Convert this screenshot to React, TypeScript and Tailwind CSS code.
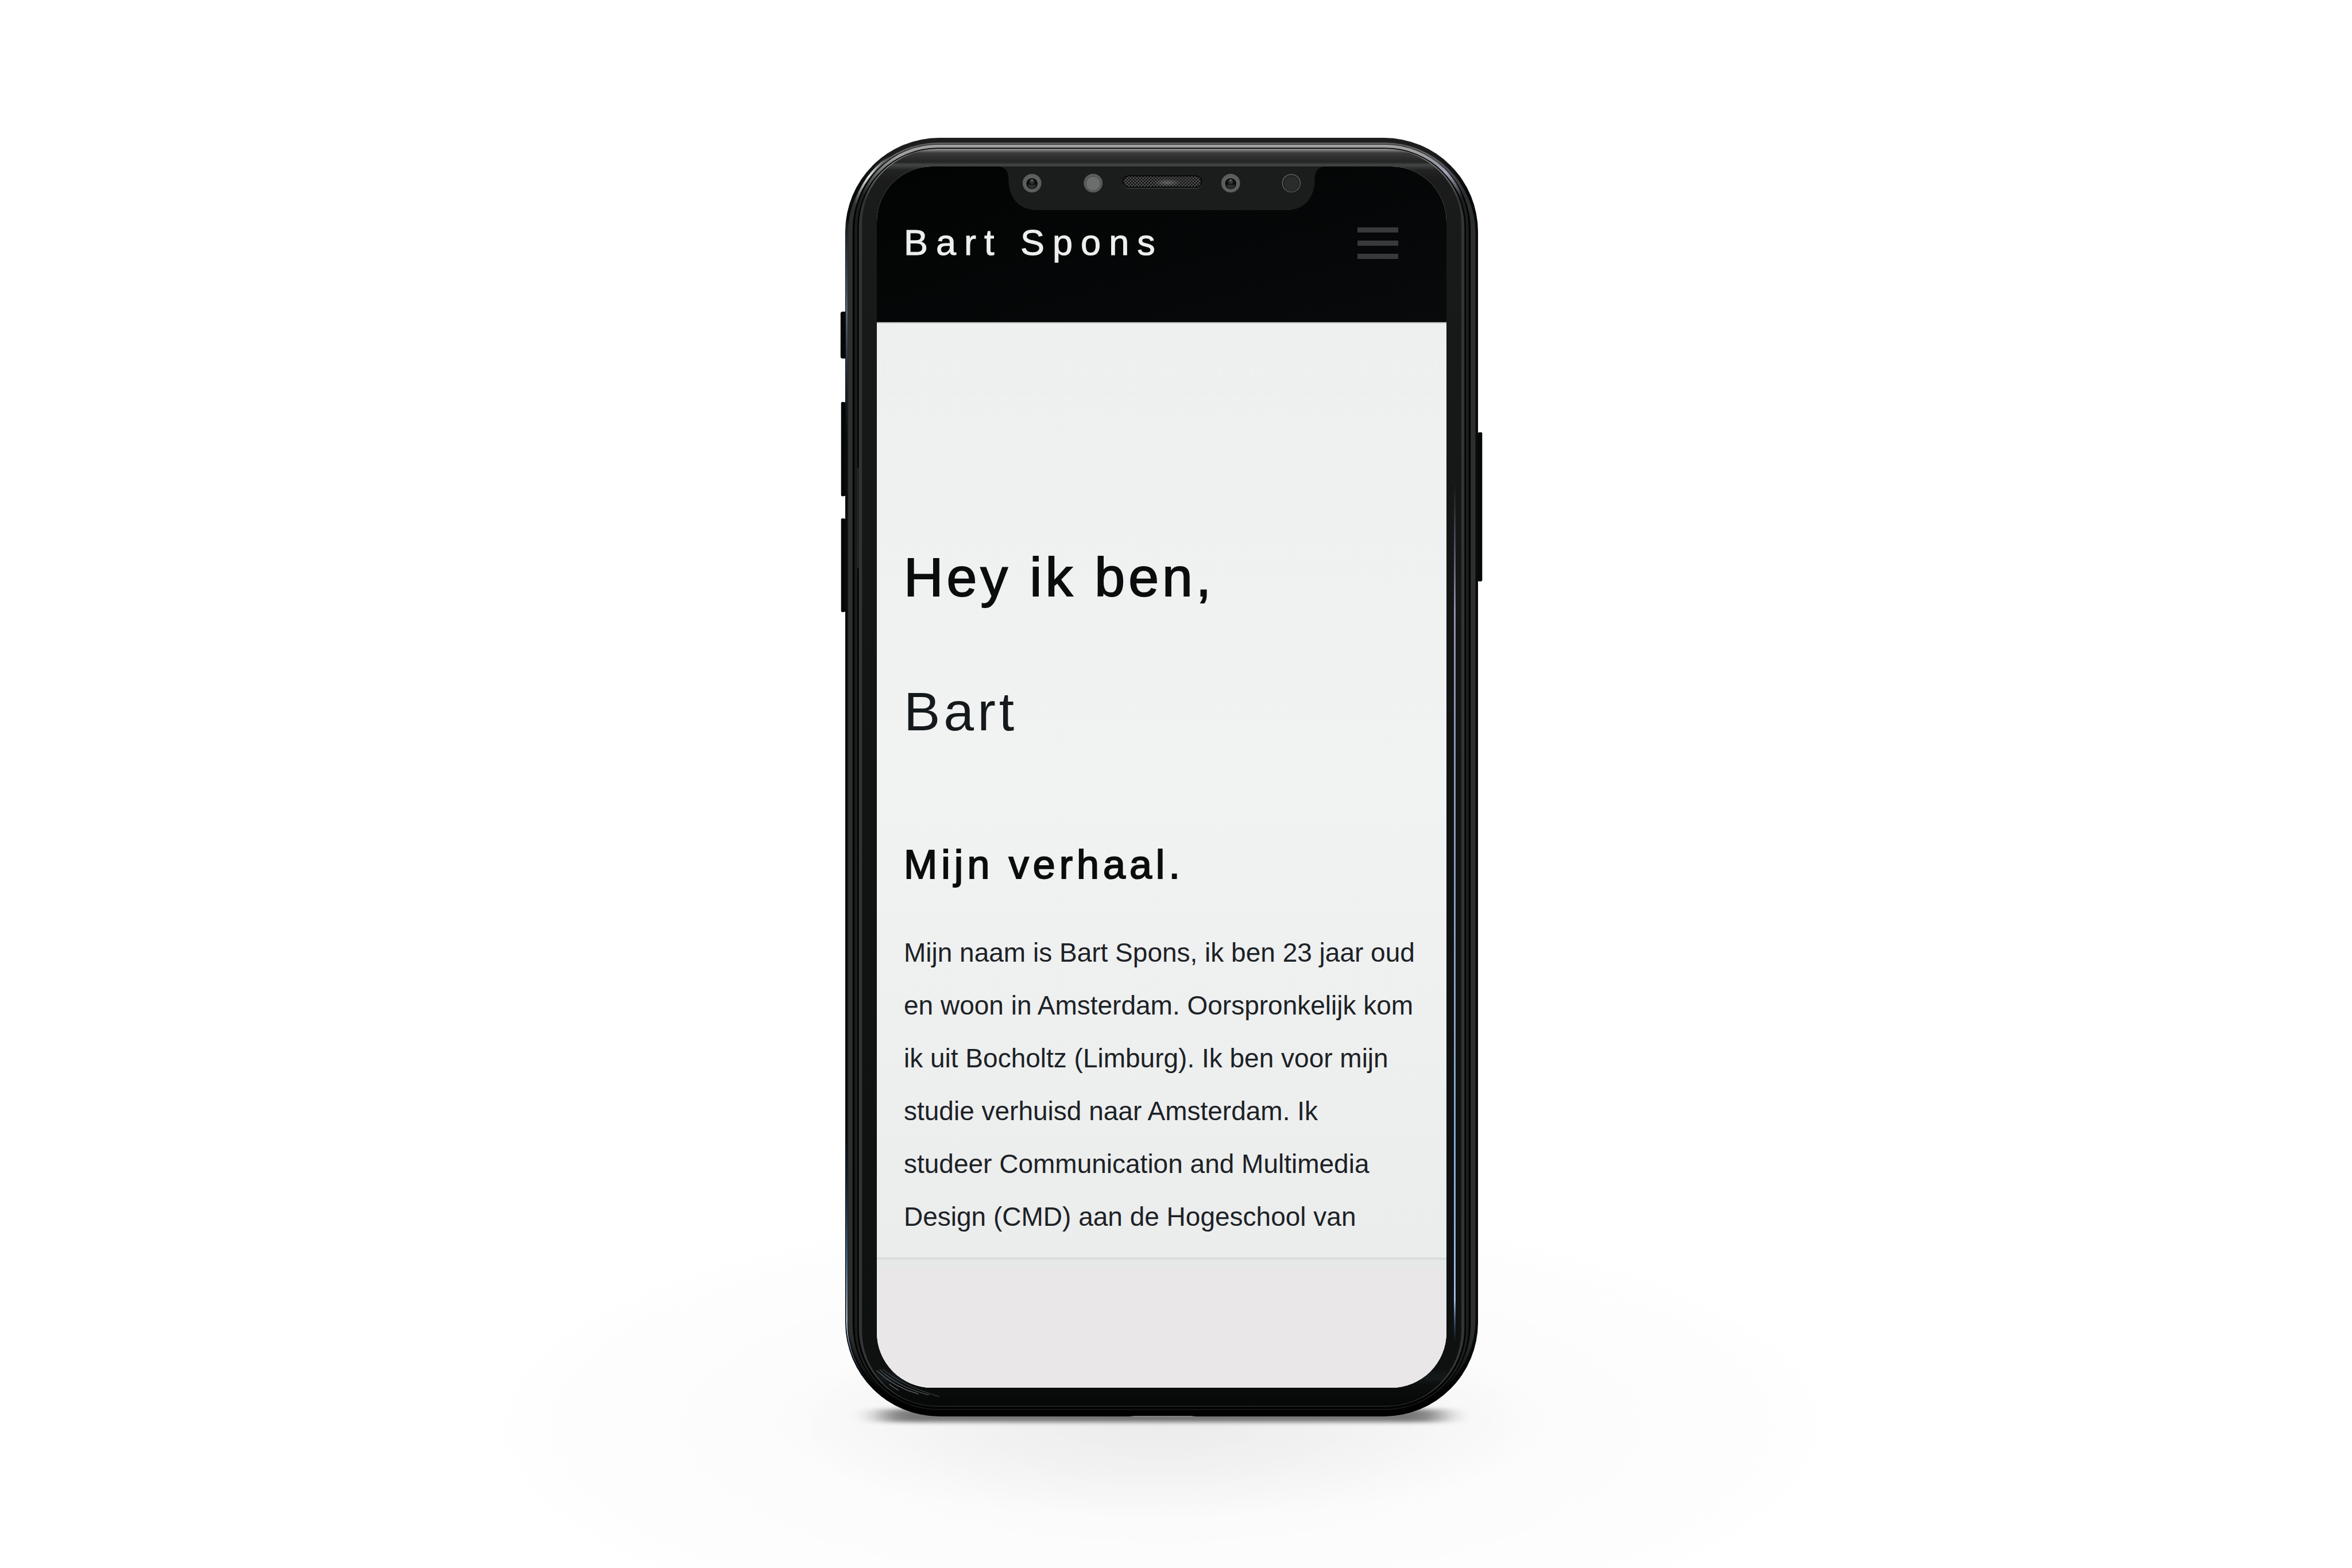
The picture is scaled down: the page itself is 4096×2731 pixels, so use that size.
import React from "react";

const STORY_START =
  "Mijn naam is Bart Spons, ik ben 23 jaar oud en woon in Amsterdam. Oorspronkelijk kom ik uit Bocholtz (Limburg). Ik ben voor mijn studie verhuisd naar Amsterdam. Ik";
const STORY_END = "studeer Communication and Multimedia Design (CMD) aan de Hogeschool van";

/* Outline of the handset, inset separately on the sides, top and bottom. */
function ring(side: number, top: number, bottom: number) {
  const w = 1210;
  const h = 2450;
  const r = 180 - side * 1.15;
  const l = side;
  const t = top;
  const x = w - side;
  const y = h - bottom;
  return `M${l + r} ${t}H${x - r}A${r} ${r} 0 0 1 ${x} ${t + r}V${y - r}A${r} ${r} 0 0 1 ${x - r} ${y}H${l + r}A${r} ${r} 0 0 1 ${l} ${y - r}V${t + r}A${r} ${r} 0 0 1 ${l + r} ${t}Z`;
}

function Gradient({ id, top, side, bottom }: { id: string; top: string; side: string; bottom: string }) {
  return (
    <linearGradient id={id} x1="0" y1="0" x2="0" y2="1">
      <stop offset="0" stopColor={top} />
      <stop offset="0.01" stopColor={top} />
      <stop offset="0.04" stopColor={side} />
      <stop offset="0.94" stopColor={side} />
      <stop offset="0.985" stopColor={bottom} />
      <stop offset="1" stopColor={bottom} />
    </linearGradient>
  );
}

function Frame() {
  return (
    <svg
      aria-hidden="true"
      className="absolute inset-0 h-full w-full overflow-visible"
      viewBox="0 0 1210 2450"
      preserveAspectRatio="none"
    >
      <defs>
        <Gradient id="edge" top="#1d1d1d" side="#080b0d" bottom="#010101" />
        <Gradient id="outer" top="#606060" side="#2d2f2f" bottom="#050505" />
        <Gradient id="mid" top="#a0a0a0" side="#1c1e1e" bottom="#242424" />
        <Gradient id="inner" top="#8c8c8c" side="#313435" bottom="#3c3c3c" />
        <linearGradient id="glass" x1="0" y1="0" x2="0" y2="1">
          <stop offset="0" stopColor="#8c8c8c" />
          <stop offset="0.003" stopColor="#3a3a3a" />
          <stop offset="0.01" stopColor="#232424" />
          <stop offset="0.0125" stopColor="#444646" />
          <stop offset="0.0165" stopColor="#222323" />
          <stop offset="0.024" stopColor="#1b1c1b" />
          <stop offset="0.09" stopColor="#171a19" />
          <stop offset="0.5" stopColor="#111412" />
          <stop offset="0.97" stopColor="#0e1110" />
          <stop offset="0.978" stopColor="#15191c" />
          <stop offset="0.983" stopColor="#0c0e0e" />
          <stop offset="1" stopColor="#060707" />
        </linearGradient>
        <linearGradient id="shine" x1="0" y1="0" x2="0" y2="1">
          <stop offset="0" stopColor="#8a8fae" stopOpacity="0" />
          <stop offset="0.15" stopColor="#9a9cb8" />
          <stop offset="0.75" stopColor="#8fb2e0" />
          <stop offset="0.95" stopColor="#a8c8f5" />
          <stop offset="1" stopColor="#3a5f90" stopOpacity="0" />
        </linearGradient>
        <linearGradient id="leftTop" x1="0" y1="0" x2="0" y2="1">
          <stop offset="0" stopColor="#5a6872" stopOpacity="0.2" />
          <stop offset="0.4" stopColor="#56636d" />
          <stop offset="1" stopColor="#1a242c" stopOpacity="0" />
        </linearGradient>
        <linearGradient id="leftBottom" x1="0" y1="0" x2="0" y2="1">
          <stop offset="0" stopColor="#28517c" stopOpacity="0" />
          <stop offset="0.5" stopColor="#5f90bc" />
          <stop offset="0.75" stopColor="#e6f4ff" />
          <stop offset="1" stopColor="#1d3f6a" stopOpacity="0" />
        </linearGradient>
        <linearGradient id="arcLeft" x1="0" y1="1" x2="1" y2="0">
          <stop offset="0" stopColor="#ffffff" stopOpacity="0" />
          <stop offset="0.5" stopColor="#ffffff" stopOpacity="0.9" />
          <stop offset="1" stopColor="#ffffff" stopOpacity="0" />
        </linearGradient>
        <linearGradient id="arcRight" x1="0" y1="0" x2="1" y2="1">
          <stop offset="0" stopColor="#8890a0" stopOpacity="0" />
          <stop offset="0.55" stopColor="#b4b8d2" stopOpacity="0.8" />
          <stop offset="1" stopColor="#8890a0" stopOpacity="0" />
        </linearGradient>
        <radialGradient id="floor">
          <stop offset="0" stopColor="#000000" stopOpacity="0.03" />
          <stop offset="0.5" stopColor="#000000" stopOpacity="0.014" />
          <stop offset="0.9" stopColor="#000000" stopOpacity="0.006" />
          <stop offset="1" stopColor="#000000" stopOpacity="0" />
        </radialGradient>
        <radialGradient id="pool">
          <stop offset="0" stopColor="#000000" stopOpacity="0.05" />
          <stop offset="0.5" stopColor="#000000" stopOpacity="0.03" />
          <stop offset="1" stopColor="#000000" stopOpacity="0" />
        </radialGradient>
        <filter id="soft" x="-10%" y="-400%" width="120%" height="900%">
          <feGaussianBlur stdDeviation="28 4" />
        </filter>
      </defs>

      {/* floor shading and contact shadow */}
      <ellipse cx="605" cy="2470" rx="1300" ry="430" fill="url(#floor)" />
      <ellipse cx="605" cy="2460" rx="760" ry="190" fill="url(#pool)" />
      <rect x="70" y="2436" width="1070" height="25" rx="12" fill="#000000" opacity="0.5" filter="url(#soft)" />

      {/* side buttons */}
      <g fill="#060808">
        <rect x="-9" y="333" width="20" height="90" rx="4" />
        <path d="M-8 508Q-8 506-5 506L11 508V684L-5 687Q-8 687-8 684Z" />
        <path d="M-8 731Q-8 729-5 729L11 732V906L-5 909Q-8 909-8 906Z" />
        <path d="M1218 566Q1218 564 1214 564L1200 567V848L1214 850Q1218 850 1218 848Z" />
      </g>

      <path d={ring(0, 0, 0)} fill="url(#edge)" />
      <rect x="1" y="160" width="4" height="440" fill="url(#leftTop)" />
      <path d={ring(5, 9, 11)} fill="url(#outer)" />
      <path d={ring(14, 12, 12)} fill="#020303" />
      <path d={ring(18, 13, 13)} fill="url(#mid)" />
      <path d={ring(23, 19, 14)} fill="#020303" />
      <path d={ring(26, 21, 19)} fill="url(#inner)" />
      <path d={ring(32, 22, 20)} fill="url(#glass)" />
      <rect x="23" y="632" width="3" height="193" fill="#232526" />
      <path d="M538 2451L552 2449H662L676 2451Z" fill="#808080" />

      {/* reflections */}
      <rect x="1164" y="660" width="3" height="1650" fill="url(#shine)" />
      <path d="M3 1900V2272A177 177 0 0 0 50 2390" fill="none" stroke="url(#leftBottom)" strokeWidth="2" />
      <path d="M18 130A170 170 0 0 1 84 36" fill="none" stroke="url(#arcLeft)" strokeWidth="4" />
      <path d="M1090 24A172 172 0 0 1 1180 116" fill="none" stroke="url(#arcRight)" strokeWidth="6" />
      <g fill="none" stroke="#b8c4d0" strokeWidth="1">
        <path d="M60 2362Q95 2395 140 2407" opacity="0.8" />
        <path d="M66 2360Q100 2393 160 2409" opacity="0.6" />
        <path d="M72 2359Q108 2391 180 2412" opacity="0.4" />
        <path d="M84 2388Q94 2396 102 2400" opacity="0.8" />
      </g>
    </svg>
  );
}

function Lens({ cx }: { cx: number }) {
  return (
    <g>
      <circle cx={cx} cy="32" r="18" fill="#5c5e5e" />
      <circle cx={cx} cy="33" r="12" fill="#747676" />
      <circle cx={cx} cy="33" r="11" fill="#0c0d0d" />
      <ellipse cx={cx} cy="29" rx="5" ry="5" fill="#2e3030" />
      <path d={`M${cx - 8} 35H${cx + 8}A8 8 0 0 1 ${cx - 8} 35Z`} fill="#2c2e2e" />
      <circle cx={cx} cy="27" r="2" fill="#606262" />
    </g>
  );
}

function Notch() {
  return (
    <svg
      aria-hidden="true"
      className="absolute left-1/2 top-0 h-[76px] w-[570px] -translate-x-1/2"
      viewBox="0 0 626 84"
      preserveAspectRatio="none"
    >
      <defs>
        <pattern id="mesh" width="6" height="6" patternUnits="userSpaceOnUse">
          <rect width="6" height="6" fill="#555656" />
          <circle cx="1.5" cy="1.5" r="1.7" fill="#0a0a0a" />
          <circle cx="4.5" cy="4.5" r="1.7" fill="#0a0a0a" />
        </pattern>
        <radialGradient id="glint">
          <stop offset="0" stopColor="#8a8a8a" stopOpacity="0.55" />
          <stop offset="1" stopColor="#8a8a8a" stopOpacity="0" />
        </radialGradient>
      </defs>
      <path
        d="M0 0H626Q606 1 606 24C606 60 586 84 552 84H74C40 84 20 60 20 24Q20 1 0 0Z"
        fill="#1b1c1c"
      />
      <Lens cx={65} />
      <circle cx="182" cy="32" r="18" fill="#5c5e5e" />
      <circle cx="182" cy="33" r="14" fill="#6c6e6e" stroke="#3e4040" strokeWidth="1" />
      <rect x="238" y="18" width="152" height="25" rx="12" fill="#333434" />
      <rect x="238" y="17" width="152" height="24" rx="12" fill="#050505" />
      <rect x="240" y="19" width="148" height="20" rx="10" fill="url(#mesh)" />
      <ellipse cx="324" cy="31" rx="26" ry="7" fill="url(#glint)" />
      <Lens cx={445} />
      <circle cx="561" cy="32" r="17" fill="#2a2b2b" stroke="#606262" strokeWidth="1.5" />
      <circle cx="561" cy="33" r="15" fill="#2a2b2b" stroke="#151515" strokeWidth="1" />
    </svg>
  );
}

export default function App() {
  return (
    <div className="flex min-h-screen w-full flex-col items-center overflow-hidden bg-white pr-[50px] pt-[240px] font-['Liberation_Sans',Arial,sans-serif]">
      <div className="relative w-[1102px] max-w-full px-[55px] py-[50px]">
        <Frame />
        <div className="relative overflow-hidden rounded-[96px] bg-[#f0f1f1]">
          <header className="flex h-[273px] items-start justify-between border-b-2 border-[#b4b5b5] bg-gradient-to-br from-[#020404] to-[#080a0b] pl-[47px] pr-[84px] pt-[96px]">
            <a
              href="#home"
              className="text-[63px] leading-[72px] tracking-[14px] text-[#eeeeee] [-webkit-text-stroke:1px_#eeeeee]"
            >
              Bart Spons
            </a>
            <button type="button" aria-label="Menu" className="mt-[10px] flex w-[71px] flex-col gap-[14px]">
              <span className="h-[9px] w-full bg-[#38393a]" />
              <span className="h-[9px] w-full bg-[#38393a]" />
              <span className="h-[9px] w-full bg-[#38393a]" />
            </button>
          </header>
          <Notch />
          <main className="bg-gradient-to-b from-[#eeefef] via-[#f1f2f2] to-[#ebecec] pb-[25px] pl-[47px] pr-[40px] pt-[388px]">
            <h1 className="text-[95px] leading-[108px] tracking-[6px] text-[#0a0d0d] [-webkit-text-stroke:2px_#0a0d0d]">
              Hey ik ben,
            </h1>
            <p className="mt-[126px] text-[95px] leading-[108px] tracking-[6px] text-[#14191c]">Bart</p>
            <h2 className="mt-[173px] text-[70px] leading-[80px] tracking-[7px] text-[#0a0d0d] [-webkit-text-stroke:2px_#0a0d0d]">
              Mijn verhaal.
            </h2>
            <p className="mt-[67px] text-[46px] leading-[92px] text-[#1c2226]">
              {STORY_START}
              <br />
              {STORY_END}
            </p>
          </main>
          <footer className="h-[227px] border-t-4 border-[#dbdcdc] bg-[#e9e7e7]">
            <div className="h-[18px] bg-[#e6e7e7]" />
          </footer>
        </div>
      </div>
    </div>
  );
}
